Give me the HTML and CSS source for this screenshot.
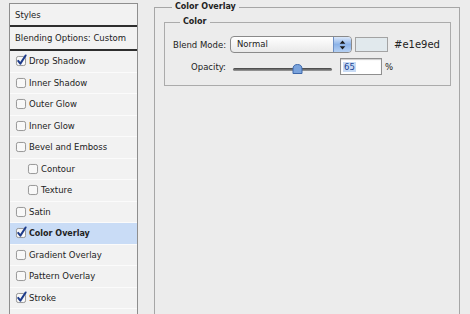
FILE: index.html
```html
<!DOCTYPE html>
<html lang="en">
<head>
  <meta charset="UTF-8">
  <title>Layer Style - Color Overlay</title>
  <link rel="stylesheet" href="styles.css">
</head>
<body>
  <div class="dialog">
    <!-- Styles list -->
    <div class="styles-panel">
      <div class="panel-head">Styles</div>
      <div class="panel-head blend">Blending Options: Custom</div>
      <ul class="effects">
        <li class="effect"><svg class="box" viewBox="0 0 11 11"><rect x="0.5" y="0.5" width="10" height="10" rx="2"/><path d="M2.4 5.4 L4.8 8.4 L10.6 -0.6"/></svg>Drop Shadow</li>
        <li class="effect"><svg class="box" viewBox="0 0 11 11"><rect x="0.5" y="0.5" width="10" height="10" rx="2"/></svg>Inner Shadow</li>
        <li class="effect"><svg class="box" viewBox="0 0 11 11"><rect x="0.5" y="0.5" width="10" height="10" rx="2"/></svg>Outer Glow</li>
        <li class="effect"><svg class="box" viewBox="0 0 11 11"><rect x="0.5" y="0.5" width="10" height="10" rx="2"/></svg>Inner Glow</li>
        <li class="effect"><svg class="box" viewBox="0 0 11 11"><rect x="0.5" y="0.5" width="10" height="10" rx="2"/></svg>Bevel and Emboss</li>
        <li class="effect sub"><svg class="box" viewBox="0 0 11 11"><rect x="0.5" y="0.5" width="10" height="10" rx="2"/></svg>Contour</li>
        <li class="effect sub"><svg class="box" viewBox="0 0 11 11"><rect x="0.5" y="0.5" width="10" height="10" rx="2"/></svg>Texture</li>
        <li class="effect"><svg class="box" viewBox="0 0 11 11"><rect x="0.5" y="0.5" width="10" height="10" rx="2"/></svg>Satin</li>
        <li class="effect active"><svg class="box" viewBox="0 0 11 11"><rect x="0.5" y="0.5" width="10" height="10" rx="2"/><path d="M2.4 5.4 L4.8 8.4 L10.6 -0.6"/></svg>Color Overlay</li>
        <li class="effect"><svg class="box" viewBox="0 0 11 11"><rect x="0.5" y="0.5" width="10" height="10" rx="2"/></svg>Gradient Overlay</li>
        <li class="effect"><svg class="box" viewBox="0 0 11 11"><rect x="0.5" y="0.5" width="10" height="10" rx="2"/></svg>Pattern Overlay</li>
        <li class="effect"><svg class="box" viewBox="0 0 11 11"><rect x="0.5" y="0.5" width="10" height="10" rx="2"/><path d="M2.4 5.4 L4.8 8.4 L10.6 -0.6"/></svg>Stroke</li>
      </ul>
    </div>

    <!-- Color Overlay settings -->
    <fieldset class="group">
      <legend>Color Overlay</legend>
      <fieldset class="group inner">
        <legend>Color</legend>
        <div class="row">
          <label>Blend Mode:</label>
          <div class="select">
            <span class="value">Normal</span>
            <span class="stepper">
              <svg viewBox="0 0 7 10" width="7" height="10"><path d="M3.5 0.5 L6.3 3.8 L0.7 3.8 Z M3.5 9.5 L6.3 6.2 L0.7 6.2 Z"/></svg>
            </span>
          </div>
          <div class="swatch"></div>
          <span class="hex">#e1e9ed</span>
        </div>
        <div class="row">
          <label>Opacity:</label>
          <div class="slider">
            <div class="track"></div>
            <svg class="thumb" viewBox="0 0 11 10" width="11" height="10"><path d="M1 9.5 L1 5 Q1 0.5 5.5 0.5 Q10 0.5 10 5 L10 9.5 Z"/></svg>
          </div>
          <div class="field"><span class="sel">65</span></div>
          <span class="unit">%</span>
        </div>
      </fieldset>
    </fieldset>
  </div>
</body>
</html>
```

FILE: styles.css
```css
/* General styles */
body {
  margin: 0;
  height: 314px;
  overflow: hidden;
  background-color: #ececec;
  font-family: "DejaVu Sans", sans-serif;
  font-size: 8.5px;
  color: #222;
}

.dialog {
  display: flex;
  align-items: flex-start;
  padding-left: 9px;
}

/* Styles list */
.styles-panel {
  width: 129px;
  height: 311px;
  margin-top: 3px;
  box-sizing: border-box;
  border: 1px solid #8e8e8e;
  border-bottom: none;
  background-color: #f2f2f2;
  flex-shrink: 0;
}

.panel-head {
  height: 23px;
  box-sizing: border-box;
  border-bottom: 2px solid #2e2e2e;
  padding-left: 5px;
  display: flex;
  align-items: center;
}

.panel-head.blend {
  height: 24px;
}

.effects {
  list-style: none;
  margin: 0;
  padding: 0;
}

.effect {
  height: 21.5px;
  box-sizing: border-box;
  border-bottom: 1px solid #fbfbfb;
  padding-left: 6px;
  display: flex;
  align-items: center;
  gap: 3px;
}

.effect.sub {
  padding-left: 18px;
}

.effect.active {
  background-color: #c9dcf6;
  font-weight: bold;
  font-size: 8px;
}

.box {
  width: 10px;
  height: 10px;
  overflow: visible;
  flex-shrink: 0;
}

.box rect {
  fill: #f8f8f8;
  stroke: #8d8d8d;
}

.box path {
  fill: none;
  stroke: #1d3b8a;
  stroke-width: 2.2;
  stroke-linecap: round;
  stroke-linejoin: round;
}

/* Fieldsets */
.group {
  width: 306px;
  height: 312px;
  box-sizing: border-box;
  margin: 2px 0 0 16px;
  padding: 0 8px 0 9px;
  border: 1px solid #a6a6a6;
  border-bottom: none;
  min-inline-size: 0;
}

.group legend {
  margin-left: 8px;
  padding: 0 3px;
  font-weight: bold;
  font-size: 8px;
  line-height: 10px;
}

.group.inner {
  width: auto;
  height: auto;
  margin: 5px 0 0 0;
  padding: 9px 0 10px 0;
  border: 1px solid #ababab;
}

.group.inner legend {
  margin-left: 15px;
}

.row {
  height: 17px;
  display: flex;
  align-items: center;
}

.row + .row {
  margin-top: 5px;
}

.row label {
  width: 61px;
  text-align: right;
  flex-shrink: 0;
}

.select {
  margin-left: 4px;
  width: 122px;
  height: 17px;
  box-sizing: border-box;
  border: 1px solid #8a8a8a;
  border-radius: 4px;
  background: linear-gradient(#ffffff, #e9e9e9);
  display: flex;
  overflow: hidden;
}

.select .value {
  flex: 1;
  padding-left: 6px;
  line-height: 15px;
}

.stepper {
  width: 17px;
  border-left: 1px solid #6d8fc4;
  background: linear-gradient(#dbe8fa, #8cb3e8 50%, #b5d0f3);
  display: flex;
  align-items: center;
  justify-content: center;
}

.stepper path {
  fill: #1a1a1a;
}

.swatch {
  margin-left: 3px;
  width: 33px;
  height: 15px;
  box-sizing: border-box;
  border: 1px solid #a3a3a3;
  background-color: #e1e9ed;
}

.hex {
  margin-left: 6px;
  font-size: 10px;
  color: #222;
}

.slider {
  position: relative;
  margin-left: 7px;
  width: 99px;
  height: 17px;
  display: flex;
  align-items: center;
  padding-top: 5px;
  box-sizing: border-box;
}

.track {
  width: 100%;
  height: 3px;
  border-radius: 2px;
  background: linear-gradient(#3f3f3f, #a0a0a0);
}

.thumb {
  position: absolute;
  left: 59px;
  top: 6px;
}

.thumb path {
  fill: #7aa3dc;
  stroke: #3e68ab;
  stroke-width: 1;
}

.field {
  margin-left: 8px;
  width: 42px;
  height: 17px;
  box-sizing: border-box;
  border: 1px solid #8f8f8f;
  background-color: #fff;
  box-shadow: inset 0 1px 1px rgba(0, 0, 0, 0.2);
  padding-left: 2px;
  display: flex;
  align-items: center;
}

.field .sel {
  background-color: #c8dbf5;
  color: #1d4594;
  padding: 0 1px;
}

.unit {
  margin-left: 3px;
}
```
